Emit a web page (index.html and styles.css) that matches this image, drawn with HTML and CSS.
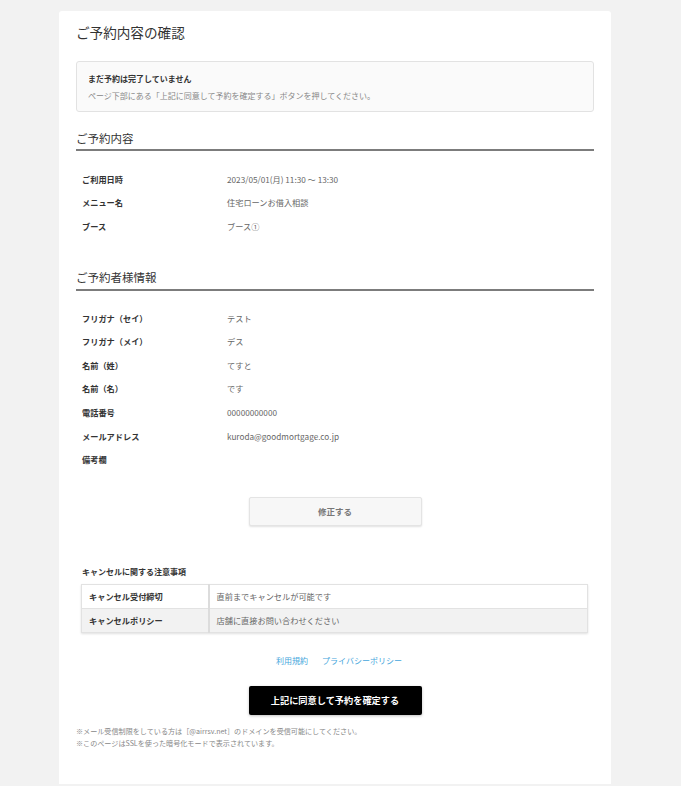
FILE: index.html
```html
<!DOCTYPE html>
<html lang="ja">
<head>
<meta charset="utf-8">
<title>ご予約内容の確認</title>
<link rel="stylesheet" href="styles.css">
</head>
<body>
<main class="card">
  <h1 class="title">ご予約内容の確認</h1>

  <div class="alert">
    <p class="alert-head">まだ予約は完了していません</p>
    <p class="alert-text">ページ下部にある「上記に同意して予約を確定する」ボタンを押してください。</p>
  </div>

  <h2 class="section">ご予約内容</h2>
  <dl class="info">
    <div class="row"><dt>ご利用日時</dt><dd>2023/05/01(月) 11:30 ～ 13:30</dd></div>
    <div class="row"><dt>メニュー名</dt><dd>住宅ローンお借入相談</dd></div>
    <div class="row"><dt>ブース</dt><dd>ブース①</dd></div>
  </dl>

  <h2 class="section section-2">ご予約者様情報</h2>
  <dl class="info info-2">
    <div class="row"><dt>フリガナ（セイ）</dt><dd>テスト</dd></div>
    <div class="row"><dt>フリガナ（メイ）</dt><dd>デス</dd></div>
    <div class="row"><dt>名前（姓）</dt><dd>てすと</dd></div>
    <div class="row"><dt>名前（名）</dt><dd>です</dd></div>
    <div class="row"><dt>電話番号</dt><dd>00000000000</dd></div>
    <div class="row"><dt>メールアドレス</dt><dd>kuroda@goodmortgage.co.jp</dd></div>
    <div class="row"><dt>備考欄</dt><dd></dd></div>
  </dl>

  <div class="btn-wrap">
    <button class="btn btn-edit" type="button">修正する</button>
  </div>

  <h3 class="cancel-head">キャンセルに関する注意事項</h3>
  <table class="cancel">
    <tr><th>キャンセル受付締切</th><td>直前までキャンセルが可能です</td></tr>
    <tr class="alt"><th>キャンセルポリシー</th><td>店舗に直接お問い合わせください</td></tr>
  </table>

  <nav class="links">
    <a href="#">利用規約</a>
    <a href="#">プライバシーポリシー</a>
  </nav>

  <div class="btn-wrap btn-wrap-confirm">
    <button class="btn btn-confirm" type="button">上記に同意して予約を確定する</button>
  </div>

  <div class="notes">
    <p>※メール受信制限をしている方は［@airrsv.net］のドメインを受信可能にしてください。</p>
    <p>※このページはSSLを使った暗号化モードで表示されています。</p>
  </div>
</main>
</body>
</html>
```

FILE: styles.css
```css
* { box-sizing: border-box; }

html, body {
  margin: 0;
  padding: 0;
  background: #f2f2f2;
}

body {
  font-family: "Noto Sans CJK JP", "Noto Sans", sans-serif;
  color: #333;
  padding: 11px 0 0 59px;
}

p { margin: 0; }

.card {
  width: 552px;
  background: #fff;
  border-radius: 3px 3px 0 0;
  padding: 11px 17px 35px;
}

.title {
  margin: 0;
  font-size: 13.6px;
  line-height: 20px;
  font-weight: normal;
  color: #333;
}

.alert {
  margin-top: 19px;
  border: 1px solid #e2e2e2;
  border-radius: 3px;
  background: #fafafa;
  padding: 7.5px 11px;
}

.alert-head {
  font-size: 8px;
  line-height: 17px;
  font-weight: bold;
  color: #333;
}

.alert-text {
  font-size: 8px;
  line-height: 17px;
  color: #888;
}

.section {
  margin: 16px 0 0;
  font-size: 11.5px;
  line-height: 20px;
  font-weight: normal;
  color: #333;
  padding-bottom: 1px;
  border-bottom: 2px solid #7c7c7c;
}

.section-2 {
  margin-top: 29px;
  padding-bottom: 2px;
}

.info {
  margin: 16px 0 0;
  padding: 0 0 0 6px;
}

.info-2 {
  margin-top: 15px;
}

.row {
  display: flex;
  height: 23.6px;
  align-items: center;
}

.row dt {
  width: 145px;
  font-size: 8.2px;
  font-weight: bold;
  color: #333;
}

.row dd {
  margin: 0;
  font-size: 8.2px;
  color: #666;
}

.btn-wrap {
  display: flex;
  justify-content: center;
  margin-top: 25.6px;
}

.btn {
  width: 173px;
  height: 29px;
  border-radius: 2px;
  font-family: inherit;
  font-size: 8.5px;
  font-weight: bold;
  cursor: pointer;
}

.btn-edit {
  background: #f7f7f7;
  border: 1px solid #e4e4e4;
  color: #777;
  box-shadow: 0 1px 2px rgba(0, 0, 0, 0.12);
}

.cancel-head {
  margin: 39px 0 0;
  padding-left: 6px;
  font-size: 8px;
  line-height: 14px;
  font-weight: bold;
  color: #333;
}

.cancel {
  margin: 5px 0 0 5px;
  width: 507px;
  border-collapse: collapse;
  box-shadow: 0 1px 2px rgba(0, 0, 0, 0.12);
}

.cancel th,
.cancel td {
  height: 24px;
  padding: 0 7px;
  border: 1px solid #e2e2e2;
  font-size: 8.2px;
  text-align: left;
}

.cancel th {
  width: 127px;
  font-weight: bold;
  color: #333;
  border-right: 2px solid #dcdcdc;
}

.cancel td {
  color: #666;
}

.cancel .alt th,
.cancel .alt td {
  background: #f2f2f2;
}

.links {
  margin-top: 21px;
  display: flex;
  justify-content: center;
  gap: 14px;
  font-size: 8px;
  line-height: 14px;
  padding-left: 8px;
}

.links a {
  color: #45a6dc;
  text-decoration: none;
}

.btn-wrap-confirm {
  margin-top: 18px;
}

.btn-confirm {
  background: #000;
  border: none;
  color: #fff;
  font-size: 9.2px;
  box-shadow: 0 1px 3px rgba(0, 0, 0, 0.25);
}

.notes {
  margin-top: 10px;
  font-size: 7.1px;
  line-height: 12px;
  color: #888;
}
```
